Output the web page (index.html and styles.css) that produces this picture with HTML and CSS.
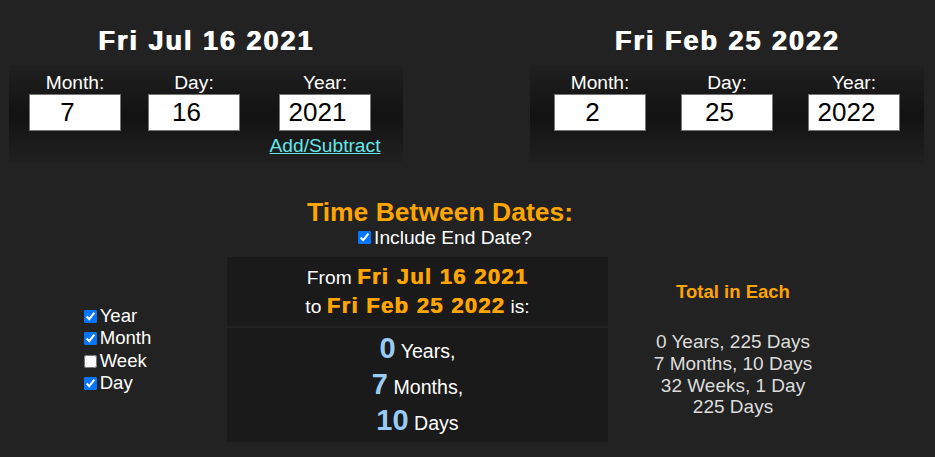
FILE: index.html
```html
<!DOCTYPE html>
<html lang="en">
<head>
<meta charset="utf-8">
<title>Time Between Dates</title>
<link rel="stylesheet" href="styles.css">
</head>
<body>
<div class="top">
  <div class="datebox">
    <h2 class="title">Fri Jul 16 2021</h2>
    <div class="panel panel-left">
      <div class="cell"><span class="label">Month:</span><input class="num" type="text" value="7"></div>
      <div class="cell"><span class="label">Day:</span><input class="num" type="text" value="16"></div>
      <div class="cell"><span class="label">Year:</span><input class="num" type="text" value="2021"><a class="link" href="#">Add/Subtract</a></div>
    </div>
  </div>
  <div class="datebox">
    <h2 class="title">Fri Feb 25 2022</h2>
    <div class="panel panel-right">
      <div class="cell"><span class="label">Month:</span><input class="num" type="text" value="2"></div>
      <div class="cell"><span class="label">Day:</span><input class="num" type="text" value="25"></div>
      <div class="cell"><span class="label">Year:</span><input class="num" type="text" value="2022"></div>
    </div>
  </div>
</div>

<div class="head">
  <h3 class="heading">Time Between Dates:</h3>
  <label class="include"><input type="checkbox" checked>Include End Date?</label>
</div>

<div class="results">
  <div class="checks">
    <div class="checklist">
      <label class="chk"><input type="checkbox" checked>Year</label>
      <label class="chk"><input type="checkbox" checked>Month</label>
      <label class="chk"><input type="checkbox">Week</label>
      <label class="chk"><input type="checkbox" checked>Day</label>
    </div>
  </div>
  <div class="mid">
    <div class="box box-from">
      <div>From <span class="date">Fri Jul 16 2021</span></div>
      <div>to <span class="date">Fri Feb 25 2022</span> is:</div>
    </div>
    <div class="box box-diff">
      <div><span class="big">0</span> Years,</div>
      <div><span class="big">7</span> Months,</div>
      <div><span class="big">10</span> Days</div>
    </div>
  </div>
  <div class="totals">
    <div class="totals-title">Total in Each</div>
    <div class="totals-list">
      <div>0 Years, 225 Days</div>
      <div>7 Months, 10 Days</div>
      <div>32 Weeks, 1 Day</div>
      <div>225 Days</div>
    </div>
  </div>
</div>
</body>
</html>
```

FILE: styles.css
```css
body {
  margin: 8px;
  background: #222222;
  color: #ffffff;
  font-family: "Liberation Sans", Arial, sans-serif;
  font-size: 19.2px;
}

.top {
  display: flex;
  justify-content: space-between;
  padding: 0 3px 0 1px;
}

.datebox {
  width: 394px;
}

.title {
  margin: 18px 0 8px;
  font-size: 27px;
  line-height: 31px;
  font-weight: bold;
  letter-spacing: 2px;
  text-shadow: 1px 0 0 currentColor;
  text-align: center;
}

.panel {
  height: 97px;
  box-sizing: border-box;
  padding-top: 7px;
  display: grid;
  justify-content: center;
  align-content: start;
  background: linear-gradient(to bottom, #202020 0%, #121212 52%, #202020 100%);
}

.panel-left {
  grid-template-columns: 119px 119px 143px;
}

.panel-right {
  grid-template-columns: 127px 127px 127px;
}

.cell {
  text-align: center;
}

.label {
  display: block;
  line-height: 22px;
}

.num {
  display: block;
  box-sizing: border-box;
  width: 92px;
  height: 37px;
  margin: 0 auto;
  padding: 0 17px 0 2px;
  border: 1px solid #767676;
  background: #ffffff;
  color: #000000;
  font-family: "Liberation Sans", Arial, sans-serif;
  font-size: 26px;
  text-align: center;
}

.link {
  display: inline-block;
  margin-top: 4px;
  line-height: 22px;
  color: #66e6ea;
  text-decoration: underline;
}

.head {
  width: 864px;
  margin-top: 35px;
  text-align: center;
}

.heading {
  margin: 0;
  font-size: 26.5px;
  line-height: 30px;
  font-weight: bold;
  color: #ffa500;
}

.include {
  display: inline-block;
  line-height: 22px;
  margin-left: 6px;
}

.include input {
  margin: 3px 3px 3px 4px;
}

.results {
  display: flex;
  margin-top: 8px;
}

.checks {
  width: 219px;
  display: flex;
  align-items: center;
  justify-content: center;
}

.checklist {
  display: flex;
  flex-direction: column;
  margin-left: -4px;
}

.chk {
  display: block;
  line-height: 22.3px;
  font-size: 18.6px;
}

.chk input {
  margin: 3px 3px 3px 4px;
  vertical-align: -1px;
}

.mid {
  width: 381px;
}

.box {
  background: #1a1a1a;
  text-align: center;
}

.box-from {
  padding: 6px 0 5px;
  line-height: 28px;
}

.date {
  color: #ffa500;
  font-weight: bold;
  font-size: 22px;
  letter-spacing: 1.3px;
  text-shadow: 0.7px 0 0 currentColor;
}

.box-diff {
  margin-top: 2px;
  padding: 2px 0 4px;
  line-height: 28px;
  font-size: 19.6px;
}

.big {
  color: #99ccf5;
  font-weight: bold;
  font-size: 29px;
  line-height: 36px;
}

.totals {
  width: 250px;
  display: flex;
  flex-direction: column;
  justify-content: center;
  text-align: center;
}

.totals-title {
  color: #ffa500;
  font-weight: bold;
  font-size: 18.5px;
  line-height: 21px;
}

.totals-list {
  margin-top: 29px;
  color: #dddddd;
  font-size: 19px;
  line-height: 21.8px;
}
```
